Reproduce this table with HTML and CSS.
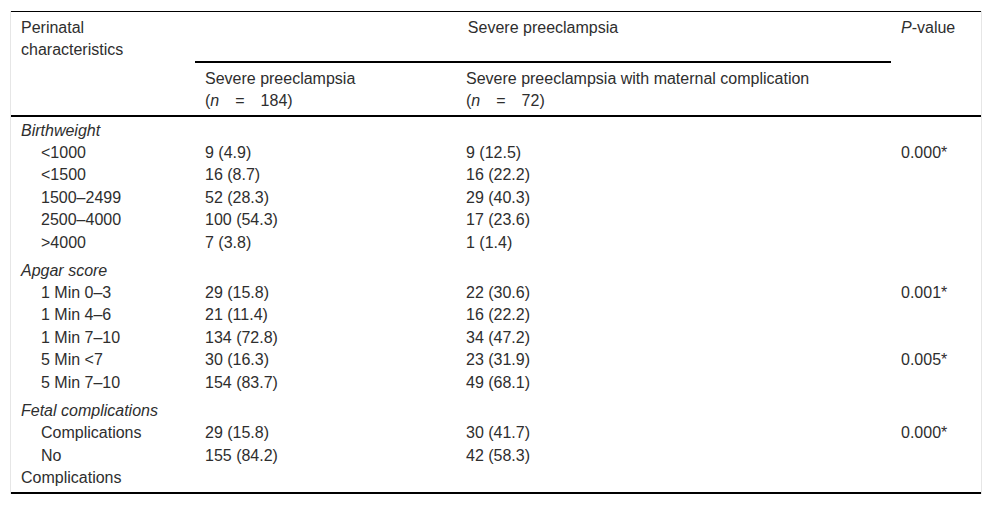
FILE: index.html
```html
<!DOCTYPE html>
<html lang="en">
<head>
<meta charset="utf-8">
<title>Perinatal characteristics</title>
<link rel="stylesheet" href="styles.css">
</head>
<body>
<div class="wrap">
<table class="tbl">
  <colgroup>
    <col class="c1"><col class="c2"><col class="c3"><col class="c4">
  </colgroup>
  <thead>
    <tr class="r1">
      <th>Perinatal characteristics</th>
      <th colspan="2" class="span">Severe preeclampsia</th>
      <th><i>P</i>-value</th>
    </tr>
    <tr class="r2">
      <th></th>
      <th>Severe preeclampsia<br>(<i>n</i>&emsp;=&emsp;184)</th>
      <th>Severe preeclampsia with maternal complication<br>(<i>n</i>&emsp;=&emsp;72)</th>
      <th></th>
    </tr>
  </thead>
  <tbody>
    <tr class="cat first"><td><i>Birthweight</i></td><td></td><td></td><td></td></tr>
    <tr><td class="ind">&lt;1000</td><td>9 (4.9)</td><td>9 (12.5)</td><td>0.000*</td></tr>
    <tr><td class="ind">&lt;1500</td><td>16 (8.7)</td><td>16 (22.2)</td><td></td></tr>
    <tr><td class="ind">1500–2499</td><td>52 (28.3)</td><td>29 (40.3)</td><td></td></tr>
    <tr><td class="ind">2500–4000</td><td>100 (54.3)</td><td>17 (23.6)</td><td></td></tr>
    <tr><td class="ind">&gt;4000</td><td>7 (3.8)</td><td>1 (1.4)</td><td></td></tr>
    <tr class="cat"><td><i>Apgar score</i></td><td></td><td></td><td></td></tr>
    <tr><td class="ind">1 Min 0–3</td><td>29 (15.8)</td><td>22 (30.6)</td><td>0.001*</td></tr>
    <tr><td class="ind">1 Min 4–6</td><td>21 (11.4)</td><td>16 (22.2)</td><td></td></tr>
    <tr><td class="ind">1 Min 7–10</td><td>134 (72.8)</td><td>34 (47.2)</td><td></td></tr>
    <tr><td class="ind">5 Min &lt;7</td><td>30 (16.3)</td><td>23 (31.9)</td><td>0.005*</td></tr>
    <tr><td class="ind">5 Min 7–10</td><td>154 (83.7)</td><td>49 (68.1)</td><td></td></tr>
    <tr class="cat"><td><i>Fetal complications</i></td><td></td><td></td><td></td></tr>
    <tr><td class="ind">Complications</td><td>29 (15.8)</td><td>30 (41.7)</td><td>0.000*</td></tr>
    <tr class="last"><td class="ind">No<br>Complications</td><td>155 (84.2)</td><td>42 (58.3)</td><td></td></tr>
  </tbody>
</table>
</div>
</body>
</html>
```
FILE: styles.css
```css
html, body {
  margin: 0;
  padding: 0;
  background: #ffffff;
}

.wrap {
  margin: 11px 0 0 10px;
  width: 970px;
  border-left: 1px solid #e6e6e6;
  border-right: 1px solid #e6e6e6;
}

.tbl {
  border-collapse: separate;
  border-spacing: 0;
  table-layout: fixed;
  width: 970px;
  font-family: "Liberation Sans", Arial, sans-serif;
  font-size: 16px;
  line-height: 22.4px;
  color: #2e2e2e;
}

.c1 { width: 184px; }
.c2 { width: 261px; }
.c3 { width: 435px; }
.c4 { width: 90px; }

.tbl th,
.tbl td {
  padding: 0 10px;
  text-align: left;
  vertical-align: top;
  font-weight: normal;
}

.tbl .r1 th {
  border-top: 1px solid #000;
  padding-top: 5px;
  padding-bottom: 1px;
}

.tbl .r1 th.span {
  text-align: center;
  border-bottom: 2px solid #000;
}

.tbl .r2 th {
  border-bottom: 2px solid #000;
  padding-top: 5px;
  padding-bottom: 2px;
}

.tbl .cat td {
  padding-top: 5.6px;
}

.tbl .cat.first td {
  padding-top: 3px;
}

.tbl .ind {
  text-indent: 20px;
}

.tbl .last td {
  padding-bottom: 3px;
  border-bottom: 2px solid #000;
}
```
